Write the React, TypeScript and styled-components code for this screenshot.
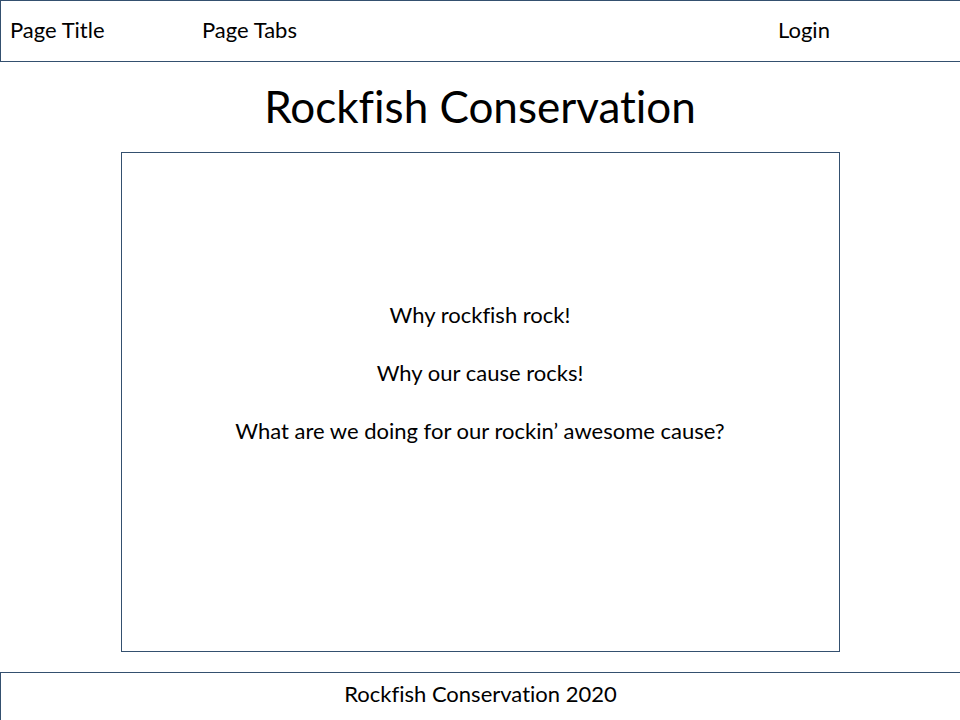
import styled, { createGlobalStyle } from 'styled-components'

const GlobalStyle = createGlobalStyle`
  html, body {
    margin: 0;
    padding: 0;
    background: #ffffff;
  }
  body {
    font-family: Lato, "Open Sans", "Liberation Sans", sans-serif;
    font-variant-ligatures: none;
    color: #000000;
    overflow: hidden;
  }
`

const Page = styled.div`
  width: 960px;
  height: 720px;
  display: flex;
  flex-direction: column;
  overflow: hidden;
`

const Header = styled.header`
  flex-shrink: 0;
  height: 60px;
  box-sizing: border-box;
  height: 62px;
  border: 1px solid #34506f;
  border-right: none;
  display: flex;
  align-items: center;
  padding: 0 0 3px 9px;
  font-size: 22px;
  line-height: 22px;
`

const HeaderItem = styled.div<{ $width?: number }>`
  width: ${(p) => (p.$width ? `${p.$width}px` : 'auto')};
  flex: ${(p) => (p.$width ? 'none' : '1')};
`

const Title = styled.h1`
  flex-shrink: 0;
  margin: 0;
  height: 90px;
  display: flex;
  align-items: center;
  justify-content: center;
  font-size: 44px;
  line-height: 44px;
  font-weight: 400;
  padding-bottom: 2px;
  box-sizing: border-box;
`

const Content = styled.main`
  flex-shrink: 0;
  width: 717px;
  height: 347px;
  margin: 0 auto;
  border: 1px solid #34506f;
  display: flex;
  flex-direction: column;
  align-items: center;
  padding-top: 151px;
  gap: 36px;
  font-size: 22px;
`

const Line = styled.p`
  margin: 0;
  line-height: 22px;
`

const Footer = styled.footer`
  flex-shrink: 0;
  margin-top: 20px;
  height: 60px;
  border: 1px solid #34506f;
  border-right: none;
  display: flex;
  justify-content: center;
  padding-top: 10px;
  font-size: 22px;
  line-height: 22px;
`

export default function App() {
  return (
    <>
      <GlobalStyle />
      <Page>
        <Header>
          <HeaderItem $width={192}>Page Title</HeaderItem>
          <HeaderItem>Page Tabs</HeaderItem>
          <HeaderItem $width={182}>Login</HeaderItem>
        </Header>
        <Title>Rockfish Conservation</Title>
        <Content>
          <Line>Why rockfish rock!</Line>
          <Line>Why our cause rocks!</Line>
          <Line>What are we doing for our rockin’ awesome cause?</Line>
        </Content>
        <Footer>Rockfish Conservation 2020</Footer>
      </Page>
    </>
  )
}
